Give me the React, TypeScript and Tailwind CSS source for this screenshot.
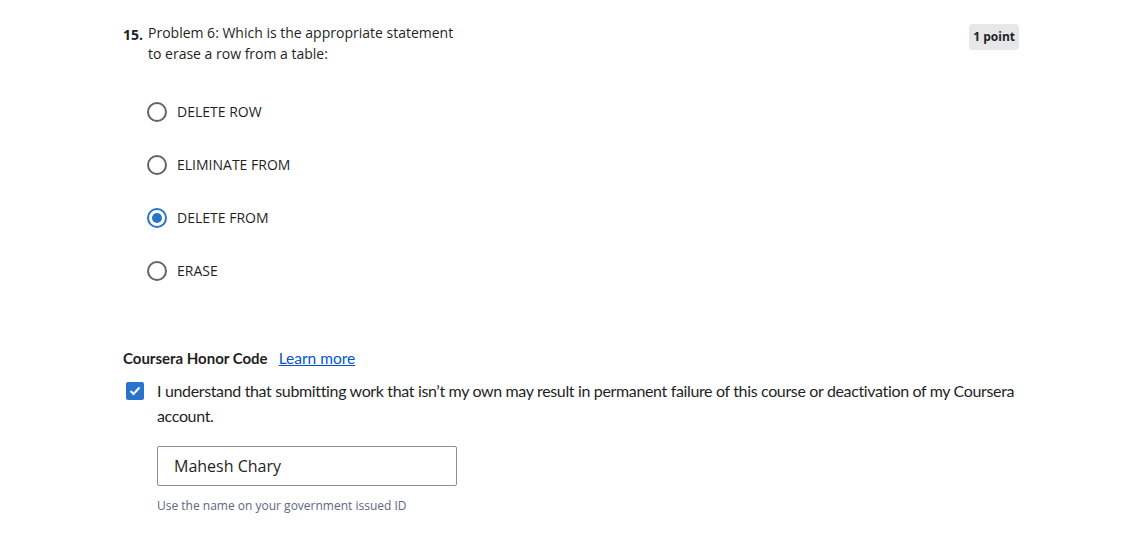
import React from 'react';

const options = ['DELETE ROW', 'ELIMINATE FROM', 'DELETE FROM', 'ERASE'];

const Radio: React.FC<{ label: string; checked: boolean }> = ({ label, checked }) => (
    <label className="flex items-center h-[53px] gap-[10px]">
        {checked ? (
            <span className="w-5 h-5 rounded-full border-2 border-[#2a73cc] flex items-center justify-center">
                <span className="w-[10px] h-[10px] rounded-full bg-[#2a73cc]" />
            </span>
        ) : (
            <span className="w-5 h-5 rounded-full border-2 border-[#636363]" />
        )}
        <span className="text-[14px] text-[#1f1f1f]">{label}</span>
    </label>
);

export default function App() {
    return (
        <div className="w-[1123px] h-[535px] bg-white font-['Open_Sans',sans-serif] text-[#1f1f1f] overflow-hidden">
            <div className="pl-[123px] pr-[104px] pt-[22px]">
                <div className="flex justify-between">
                    <div className="flex">
                        <span className="text-[14px] font-bold leading-[21px] mt-[2px] w-[25px]">15.</span>
                        <p className="text-[14px] leading-[21px] w-[320px]">
                            Problem 6: Which is the appropriate statement to erase a row from a table:
                        </p>
                    </div>
                    <span className="h-[26px] mt-[2px] px-[4px] rounded-[4px] bg-[#e5e7e8] text-[12px] font-bold flex items-center">1 point</span>
                </div>

                <div className="pl-[24px] mt-[21px] flex flex-col">
                    {options.map((o, i) => (
                        <Radio key={o} label={o} checked={i === 2} />
                    ))}
                </div>

                <div className="mt-[50px] font-['Lato',sans-serif]">
                    <div className="flex items-baseline gap-[11px] text-[15px]">
                        <span className="font-bold">Coursera Honor Code</span>
                        <a className="text-[#0056d2] underline text-[15.5px]">Learn more</a>
                    </div>
                    <div className="flex mt-[8px]">
                        <span className="w-[18px] h-[18px] mt-[4px] ml-[3px] rounded-[2px] bg-[#2a73cc] flex items-center justify-center shrink-0">
                            <svg width="12" height="10" viewBox="0 0 12 10">
                                <path d="M1.5 5 L4.5 8 L10.5 1.5" stroke="white" strokeWidth="2" fill="none" />
                            </svg>
                        </span>
                        <p className="ml-[13px] text-[16px] leading-[25px] tracking-[-0.35px]">
                            I understand that submitting work that isn’t my own may result in permanent failure of this course or deactivation of my Coursera account.
                        </p>
                    </div>
                    <div className="pl-[34px] mt-[18px]">
                        <div className="w-[300px] h-[40px] border border-[#8f8f8f] rounded-[2px] flex items-center px-4 text-[16px] font-['Open_Sans',sans-serif]">
                            Mahesh Chary
                        </div>
                        <p className="mt-[11px] text-[12px] text-[#5b6780] font-['Open_Sans',sans-serif]">Use the name on your government issued ID</p>
                    </div>
                </div>
            </div>
        </div>
    );
}
